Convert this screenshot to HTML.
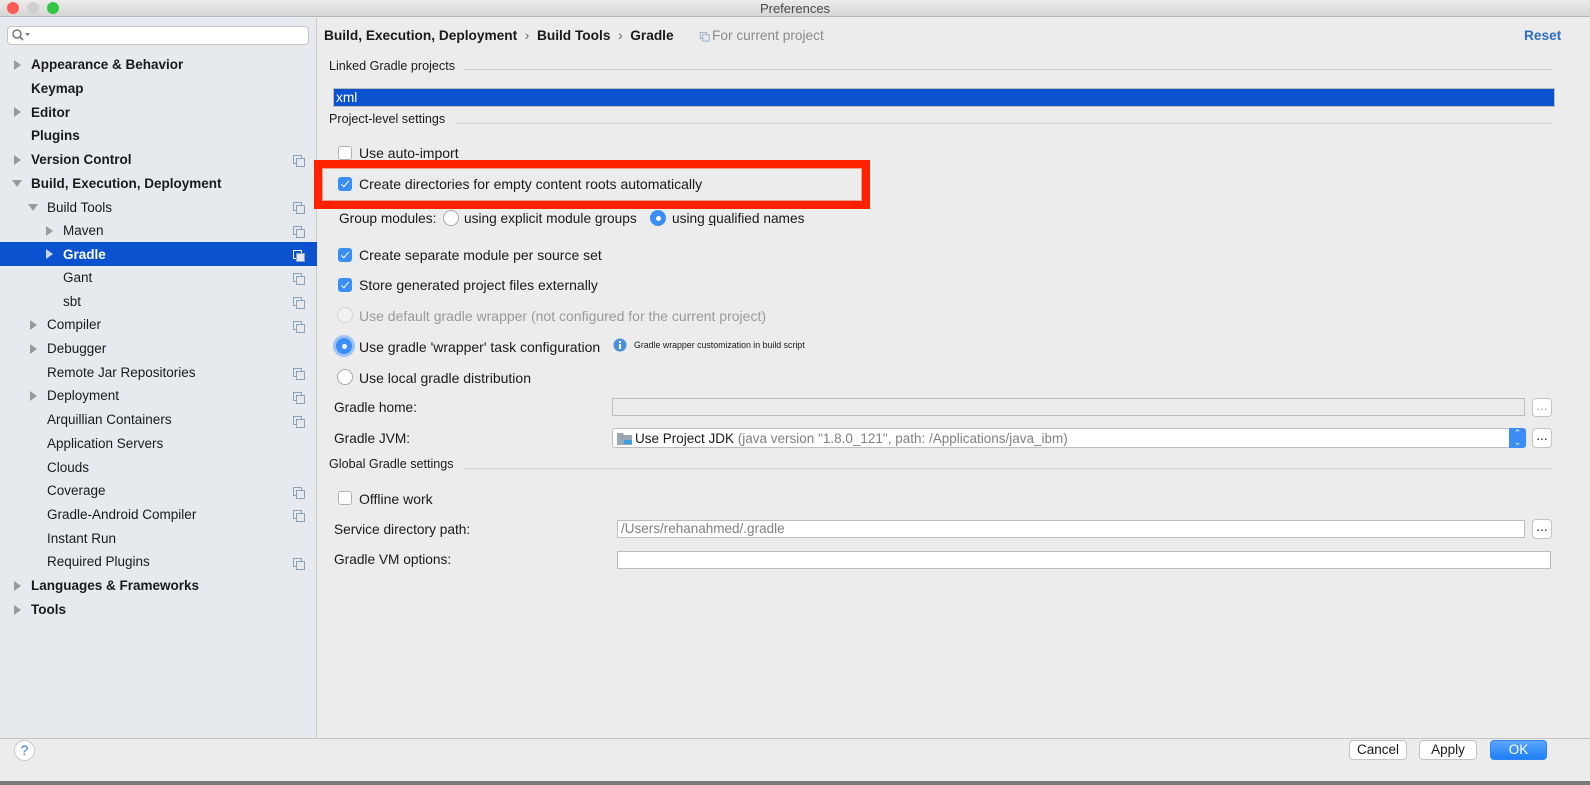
<!DOCTYPE html>
<html><head><meta charset="utf-8"><style>
*{box-sizing:border-box;margin:0;padding:0}
body{width:1590px;height:785px;position:relative;overflow:hidden;background:#ececec;font-family:"Liberation Sans",sans-serif;font-size:13.7px;color:#1a1a1a}
.a{position:absolute;white-space:nowrap}
.b{font-weight:bold}
.l{font-size:14px}
.tri{position:absolute;width:0;height:0;border-top:5px solid transparent;border-bottom:5px solid transparent;border-left:7px solid #9a9a9a}
.trd{position:absolute;width:0;height:0;border-left:5px solid transparent;border-right:5px solid transparent;border-top:7px solid #9a9a9a}
.ci{position:absolute;width:9px;height:9px;border:1px solid #8aa2b8}
.ci:after{content:"";position:absolute;left:2px;top:2px;width:7px;height:7px;border:1px solid #8aa2b8;background:#e6eaee}
.cb{position:absolute;width:14px;height:14px;border:1px solid #b0b0b0;border-radius:3px;background:#fff}
.cb.on{background:#3b8ef5;border-color:#3b8ef5}
.cb.on:after{content:"";position:absolute;left:4px;top:1px;width:3px;height:7px;border:solid #fff;border-width:0 1.5px 1.5px 0;transform:rotate(40deg)}
.rd{position:absolute;width:16px;height:16px;border:1px solid #a8a8a8;border-radius:50%;background:#fff}
.rd.on{background:#3b8ef5;border-color:#3b8ef5}
.rd.on:after{content:"";position:absolute;left:5px;top:5px;width:5px;height:5px;border-radius:50%;background:#fff}
.fld{position:absolute;border:1px solid #bdbdbd;background:#fff}
.btn{position:absolute;border:1px solid #c4c4c4;border-radius:4px;background:#fff;text-align:center;font-size:13.5px}
.sep{position:absolute;height:1px;background:#cfcfcf}
.sb{font-size:13.5px}
.st{font-size:12.6px}
</style></head><body>
<!-- title bar -->
<div class="a" style="left:0;top:0;width:1590px;height:17px;background:linear-gradient(#ececec,#d6d6d6);border-bottom:1px solid #b4b4b4"></div>
<div class="a" style="left:7px;top:2px;width:12px;height:12px;border-radius:50%;background:#fc5b57"></div>
<div class="a" style="left:27px;top:2px;width:12px;height:12px;border-radius:50%;background:#d0d0d0"></div>
<div class="a" style="left:47px;top:2px;width:12px;height:12px;border-radius:50%;background:#33c748"></div>
<div class="a" style="left:0;top:1px;width:1590px;text-align:center;color:#4a4a4a;font-size:13px">Preferences</div>
<!-- sidebar -->
<div class="a" style="left:0;top:18px;width:317px;height:720px;background:#e6eaee;border-right:1px solid #cdcdcd"></div>
<div class="a" style="left:7px;top:26px;width:302px;height:19px;background:#fff;border:1px solid #c6c6c6;border-radius:4px"></div>
<svg class="a" style="left:11px;top:28px" width="22" height="14"><circle cx="6" cy="6" r="4" fill="none" stroke="#777" stroke-width="1.5"/><line x1="9" y1="9" x2="12" y2="12" stroke="#777" stroke-width="1.8"/><path d="M14 5h5l-2.5 3z" fill="#777"/></svg>
<div class="sb">
<div class="tri" style="left:14px;top:60px"></div><div class="a b" style="left:31px;top:57px">Appearance &amp; Behavior</div>
<div class="a b" style="left:31px;top:81px">Keymap</div>
<div class="tri" style="left:14px;top:107px"></div><div class="a b" style="left:31px;top:105px">Editor</div>
<div class="a b" style="left:31px;top:128px">Plugins</div>
<div class="tri" style="left:14px;top:155px"></div><div class="a b" style="left:31px;top:152px">Version Control</div><div class="ci" style="left:293px;top:155px"></div>
<div class="trd" style="left:12px;top:180px"></div><div class="a b" style="left:31px;top:176px">Build, Execution, Deployment</div>
<div class="trd" style="left:28px;top:204px"></div><div class="a" style="left:47px;top:200px">Build Tools</div><div class="ci" style="left:293px;top:202px"></div>
<div class="tri" style="left:46px;top:226px"></div><div class="a" style="left:63px;top:223px">Maven</div><div class="ci" style="left:293px;top:226px"></div>
<div class="a" style="left:0;top:242px;width:317px;height:24px;background:#0b52d1"></div>
<div class="tri" style="left:46px;top:249px;border-left-color:#c8d4ee"></div><div class="a b" style="left:63px;top:247px;color:#fff">Gradle</div><div class="ci" style="left:293px;top:250px;border-color:#fff"></div>
<div class="a" style="left:63px;top:270px">Gant</div><div class="ci" style="left:293px;top:273px"></div>
<div class="a" style="left:63px;top:294px">sbt</div><div class="ci" style="left:293px;top:297px"></div>
<div class="tri" style="left:30px;top:320px"></div><div class="a" style="left:47px;top:317px">Compiler</div><div class="ci" style="left:293px;top:321px"></div>
<div class="tri" style="left:30px;top:344px"></div><div class="a" style="left:47px;top:341px">Debugger</div>
<div class="a" style="left:47px;top:365px">Remote Jar Repositories</div><div class="ci" style="left:293px;top:368px"></div>
<div class="tri" style="left:30px;top:391px"></div><div class="a" style="left:47px;top:388px">Deployment</div><div class="ci" style="left:293px;top:392px"></div>
<div class="a" style="left:47px;top:412px">Arquillian Containers</div><div class="ci" style="left:293px;top:416px"></div>
<div class="a" style="left:47px;top:436px">Application Servers</div>
<div class="a" style="left:47px;top:460px">Clouds</div>
<div class="a" style="left:47px;top:483px">Coverage</div><div class="ci" style="left:293px;top:487px"></div>
<div class="a" style="left:47px;top:507px">Gradle-Android Compiler</div><div class="ci" style="left:293px;top:510px"></div>
<div class="a" style="left:47px;top:531px">Instant Run</div>
<div class="a" style="left:47px;top:554px">Required Plugins</div><div class="ci" style="left:293px;top:558px"></div>
<div class="tri" style="left:14px;top:581px"></div><div class="a b" style="left:31px;top:578px">Languages &amp; Frameworks</div>
<div class="tri" style="left:14px;top:605px"></div><div class="a b" style="left:31px;top:602px">Tools</div>
</div>
<!-- header -->
<div class="a b" style="left:324px;top:28px">Build, Execution, Deployment&nbsp;&nbsp;<span style="font-weight:normal;color:#666">›</span>&nbsp;&nbsp;Build Tools&nbsp;&nbsp;<span style="font-weight:normal;color:#666">›</span>&nbsp;&nbsp;Gradle</div>
<div class="ci" style="left:699px;top:31px;transform:scale(.8)"></div>
<div class="a" style="left:712px;top:28px;color:#8a8a8a">For current project</div>
<div class="a b" style="left:1524px;top:28px;color:#2f6fc0">Reset</div>
<div class="a st" style="left:329px;top:59px">Linked Gradle projects</div><div class="sep" style="left:463px;top:69px;width:1090px"></div>
<div class="a" style="left:333px;top:88px;width:1222px;height:19px;background:#0b52d1;border:1px solid #bbb"></div>
<div class="a" style="left:336px;top:90px;color:#fff">xml</div>
<div class="a st" style="left:329px;top:112px">Project-level settings</div><div class="sep" style="left:456px;top:123px;width:1097px"></div>
<div class="cb" style="left:338px;top:146px"></div><div class="a l" style="left:359px;top:145px">Use auto-import</div>
<!-- red highlight -->
<div class="a" style="left:314px;top:160px;width:556px;height:49px;border:8px solid #ff2200"></div>
<div class="a" style="left:322px;top:168px;width:540px;height:33px;border:1px solid #e8a090"></div>
<div class="cb on" style="left:338px;top:177px"></div><div class="a l" style="left:359px;top:176px">Create directories for empty content roots automatically</div>
<div class="a" style="left:339px;top:211px">Group modules:</div>
<div class="rd" style="left:443px;top:210px"></div><div class="a" style="left:464px;top:211px">using explicit module <u>g</u>roups</div>
<div class="rd on" style="left:650px;top:210px"></div><div class="a" style="left:672px;top:211px">using <u>q</u>ualified names</div>
<div class="cb on" style="left:338px;top:248px"></div><div class="a l" style="left:359px;top:247px">Create separate module per source set</div>
<div class="cb on" style="left:338px;top:278px"></div><div class="a l" style="left:359px;top:277px">Store generated project files externally</div>
<div class="rd" style="left:337px;top:307px;border-color:#d4d4d4;background:#f2f2f2"></div><div class="a l" style="left:359px;top:308px;color:#9a9a9a">Use default gradle wrapper (not configured for the current project)</div>
<div class="rd on" style="left:336px;top:338px;box-shadow:0 0 0 3px #9cc3f5"></div><div class="a l" style="left:359px;top:339px">Use gradle 'wrapper' task configuration</div>
<svg class="a" style="left:613px;top:338px" width="14" height="14"><circle cx="7" cy="7" r="6.5" fill="#4a8fd9"/><rect x="6" y="6" width="2" height="5" fill="#fff"/><rect x="6" y="3" width="2" height="2" fill="#fff"/></svg>
<div class="a" style="left:634px;top:340px;font-size:8.8px">Gradle wrapper customization in build script</div>
<div class="rd" style="left:337px;top:369px"></div><div class="a l" style="left:359px;top:370px">Use local gradle distribution</div>
<div class="a" style="left:334px;top:400px">Gradle home:</div>
<div class="fld" style="left:612px;top:398px;width:913px;height:18px;background:#ececec"></div>
<div class="btn" style="left:1532px;top:398px;width:20px;height:19px;color:#aaa;line-height:14px">...</div>
<div class="a" style="left:334px;top:431px">Gradle JVM:</div>
<div class="fld" style="left:612px;top:428px;width:914px;height:20px;border-radius:3px"></div>
<svg class="a" style="left:617px;top:432px" width="16" height="13"><path d="M0 1h6l1 2h8v10H0z" fill="#9aa8b4"/><rect x="7" y="8" width="8" height="4" fill="#3aa0e0"/></svg>
<div class="a" style="left:635px;top:431px;font-size:13.5px">Use Project JDK <span style="color:#808080">(java version "1.8.0_121", path: /Applications/java_ibm)</span></div>
<div class="a" style="left:1509px;top:428px;width:17px;height:20px;background:#3b8ef5;border-radius:0 3px 3px 0;color:#fff;font-size:9px;line-height:9px;text-align:center;padding-top:1px">⌃<br>⌄</div>
<div class="btn" style="left:1532px;top:428px;width:20px;height:20px;line-height:14px">...</div>
<div class="a st" style="left:329px;top:457px">Global Gradle settings</div><div class="sep" style="left:464px;top:468px;width:1089px"></div>
<div class="cb" style="left:338px;top:491px"></div><div class="a l" style="left:359px;top:491px">Offline work</div>
<div class="a" style="left:334px;top:522px">Service directory path:</div>
<div class="fld" style="left:617px;top:520px;width:908px;height:18px"></div>
<div class="a" style="left:621px;top:521px;color:#808080;font-size:13.5px">/Users/rehanahmed/.gradle</div>
<div class="btn" style="left:1532px;top:519px;width:20px;height:20px;line-height:14px">...</div>
<div class="a" style="left:334px;top:552px">Gradle VM options:</div>
<div class="fld" style="left:617px;top:551px;width:934px;height:18px"></div>
<!-- footer -->
<div class="a" style="left:0;top:738px;width:1590px;height:1px;background:#c4c4c4"></div>
<div class="a" style="left:14px;top:740px;width:21px;height:21px;border-radius:50%;background:#fff;border:1px solid #c8c8c8;color:#2a7de1;text-align:center;line-height:19px;font-size:14px">?</div>
<div class="btn" style="left:1349px;top:740px;width:58px;height:20px;line-height:18px">Cancel</div>
<div class="btn" style="left:1419px;top:740px;width:58px;height:20px;line-height:18px">Apply</div>
<div class="btn" style="left:1490px;top:740px;width:57px;height:20px;line-height:18px;background:linear-gradient(#5aa6fb,#1d7ef5);border-color:#2f84f0;color:#fff">OK</div>
<div class="a" style="left:0;top:781px;width:1590px;height:4px;background:#7a7a7a"></div>
</body></html>
